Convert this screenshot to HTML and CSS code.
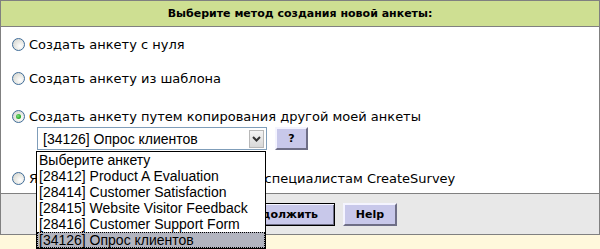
FILE: index.html
```html
<!DOCTYPE html>
<html lang="ru">
<head>
<meta charset="utf-8">
<title>Создание анкеты</title>
<link rel="stylesheet" href="styles.css">
</head>
<body>
<div class="page">
  <div class="panel">
    <div class="head">Выберите метод создания новой анкеты:</div>
    <div class="body">
      <div class="opt opt1"><span class="radio"></span><span>Создать анкету с нуля</span></div>
      <div class="opt opt2"><span class="radio"></span><span>Создать анкету из шаблона</span></div>
      <div class="opt opt3"><span class="radio checked"></span><span>Создать анкету путем копирования другой моей анкеты</span></div>
      <div class="copy-row">
        <div class="select">
          <span class="select-text">[34126] Опрос клиентов</span>
          <span class="arrow"><svg width="9" height="6" viewBox="0 0 9 6"><path d="M1 1 L4.5 4.5 L8 1" fill="none" stroke="#333" stroke-width="2"/></svg></span>
        </div>
        <button class="btn qbtn">?</button>
      </div>
      <div class="opt opt4"><span class="radio"></span><span>Я хочу заказать создание анкеты специалистам CreateSurvey</span></div>
    </div>
    <div class="foot">
      <button class="btn default">Продолжить</button>
      <button class="btn help">Help</button>
    </div>
  </div>
  <div class="note"></div>
  <ul class="list">
    <li>Выберите анкету</li>
    <li>[28412] Product A Evaluation</li>
    <li>[28414] Customer Satisfaction</li>
    <li>[28415] Website Visitor Feedback</li>
    <li>[28416] Customer Support Form</li>
    <li class="sel">[34126] Опрос клиентов</li>
  </ul>
</div>
</body>
</html>
```
FILE: styles.css
```css
html, body {
  margin: 0;
  padding: 0;
  background: #fff;
}
.page {
  position: relative;
  width: 600px;
  height: 249px;
  overflow: hidden;
  font-family: "DejaVu Sans", Verdana, sans-serif;
  font-size: 13px;
  color: #000;
  display: flex;
  flex-direction: column;
}
.panel {
  border: 1px solid #808080;
  display: flex;
  flex-direction: column;
}
.head {
  height: 25px;
  background: #cedf92;
  border-bottom: 1px solid #808080;
  display: flex;
  align-items: center;
  justify-content: center;
  font-weight: bold;
  font-size: 11px;
}
.body {
  height: 166px;
  padding-left: 10px;
  display: flex;
  flex-direction: column;
  background: #fff;
}
.opt {
  height: 20px;
  display: flex;
  align-items: center;
  gap: 4px;
  white-space: nowrap;
}
.opt1 { margin-top: 7px; }
.opt2 { margin-top: 14px; }
.opt3 { margin-top: 18px; }
.opt4 { margin-top: 18px; }
.radio {
  width: 11px;
  height: 11px;
  margin-left: 1px;
  border-radius: 50%;
  border: 1px solid #3f6c98;
  background: radial-gradient(circle at 65% 65%, #ffffff 0%, #e9e9e4 45%, #cfd0cb 100%);
  flex: none;
  position: relative;
}
.radio.checked::after {
  content: "";
  position: absolute;
  left: 3px;
  top: 3px;
  width: 5px;
  height: 5px;
  border-radius: 50%;
  background: radial-gradient(circle at 40% 40%, #7fe27f 0%, #21a121 70%);
}
.copy-row {
  margin-top: 1px;
  margin-left: 26px;
  height: 23px;
  display: flex;
  align-items: stretch;
  gap: 8px;
}
.select {
  width: 230px;
  box-sizing: border-box;
  border: 1px solid #7f9db9;
  display: flex;
  align-items: center;
  justify-content: space-between;
  font-family: "Liberation Sans", Arial, sans-serif;
  font-size: 14px;
  padding-left: 5px;
}
.arrow {
  width: 15px;
  height: 18px;
  margin-right: 2px;
  background: linear-gradient(#f4f4f4, #d8d8d8);
  border: 1px solid #b8b8b8;
  box-sizing: border-box;
  display: flex;
  align-items: center;
  justify-content: center;
}
.btn {
  font-family: "DejaVu Sans", Verdana, sans-serif;
  font-weight: bold;
  font-size: 11px;
  background: #c8c8ea;
  border: 2px solid;
  border-color: #f4f4ff #6e6e86 #6e6e86 #f4f4ff;
  padding: 0;
  color: #000;
  margin: 0;
  box-sizing: border-box;
}
.qbtn {
  width: 33px;
}
.foot {
  height: 40px;
  border-top: 1px solid #808080;
  background: #e8e8e8;
  display: flex;
  align-items: center;
  gap: 8px;
  padding-left: 219px;
}
.foot .btn {
  height: 23px;
}
.btn.default {
  width: 115px;
  border: 1px solid #000;
  box-shadow: inset 1px 1px 0 #f4f4ff, inset -1px -1px 0 #6e6e86;
}
.btn.help {
  width: 54px;
}
.note {
  flex: 1;
  background: #fff8dc;
}
.list {
  position: absolute;
  left: 36px;
  top: 151px;
  width: 230px;
  height: 98px;
  box-sizing: border-box;
  margin: 0;
  padding: 0;
  list-style: none;
  border: 1px solid #000;
  background: #fff;
  font-family: "Liberation Sans", Arial, sans-serif;
  font-size: 14px;
}
.list li {
  height: 16px;
  line-height: 16px;
  padding-left: 2px;
  white-space: nowrap;
}
.list li.sel {
  background: #b2b4bf;
  outline: 1px dotted #000;
  outline-offset: -1px;
}
```
